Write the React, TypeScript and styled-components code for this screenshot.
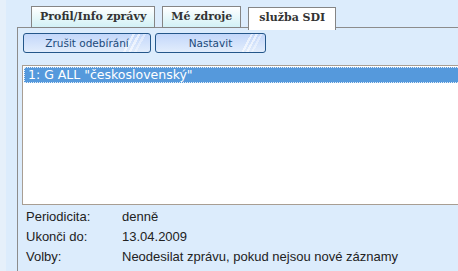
import * as React from 'react';
import styled, { createGlobalStyle } from 'styled-components';

// ========================
// Global
// ========================

const GlobalStyle = createGlobalStyle`
  html, body {
    margin: 0;
    padding: 0;
    background: #e6f0fa;
  }
`;

// ========================
// Components
// ========================

const Page = styled.div`
  height: 271px;
  padding-left: 6px;
  overflow: hidden;
`;

const Frame = styled.div`
  height: 100%;
  box-sizing: border-box;
  padding: 6px 0 0 11px;
  background: #dcecfc;
`;

const TabBar = styled.div`
  display: flex;
  align-items: flex-start;
  gap: 7px;
  padding-left: 14px;
  height: 21px;
  position: relative;
  z-index: 1;
`;

const Tab = styled.div<{ active?: boolean }>`
  box-sizing: border-box;
  height: ${(p) => (p.active ? '23px' : '22px')};
  margin-top: ${(p) => (p.active ? '1px' : '0')};
  padding: ${(p) => (p.active ? '0 10px' : '0 8px')};
  border: 1px solid #858585;
  border-bottom: ${(p) => (p.active ? 'none' : '1px solid #858585')};
  background: ${(p) => (p.active ? '#ffffff' : 'linear-gradient(#ffffff, #d2f1f6)')};
  font-family: 'DejaVu Serif', serif;
  font-weight: bold;
  font-size: 11px;
  line-height: 20px;
  color: #333;
  white-space: nowrap;
`;

const Panel = styled.div`
  height: 100%;
  border-left: 1px solid #8c8c8c;
  border-top: 1px solid #8c8c8c;
  padding: 5px 0 0 5px;
`;

const ButtonRow = styled.div`
  display: flex;
  gap: 4px;
`;

const Button = styled.button<{ w: number }>`
  box-sizing: border-box;
  width: ${(p) => p.w}px;
  height: 20px;
  padding: 0;
  border: 1px solid #24578a;
  border-radius: 3px;
  background:
    linear-gradient(
      118deg,
      transparent 80%,
      rgba(255, 255, 255, 0.6) 80%,
      rgba(255, 255, 255, 0.6) 82%,
      transparent 82%,
      transparent 84%,
      rgba(255, 255, 255, 0.6) 84%,
      rgba(255, 255, 255, 0.6) 86%,
      transparent 86%,
      transparent 88%,
      rgba(255, 255, 255, 0.4) 88%,
      rgba(255, 255, 255, 0.4) 90%,
      transparent 90%
    ),
    linear-gradient(#c3d7fa, #e2edfc);
  font-family: 'DejaVu Sans', sans-serif;
  font-size: 10.5px;
  line-height: 18px;
  color: #1b4a7a;
  text-align: center;
  cursor: pointer;
`;

const ListBox = styled.div`
  box-sizing: border-box;
  width: 460px;
  height: 140px;
  margin: 12px 0 0 -1px;
  padding: 1px;
  border: 1px solid #a89e93;
  background: #ffffff;
`;

const Option = styled.div<{ selected?: boolean }>`
  box-sizing: border-box;
  height: 16px;
  padding-left: 3px;
  border: 1px dotted ${(p) => (p.selected ? '#e4eef8' : 'transparent')};
  background: ${(p) => (p.selected ? '#5599dc' : 'transparent')};
  color: ${(p) => (p.selected ? '#ffffff' : '#222')};
  font-family: 'DejaVu Sans', sans-serif;
  font-size: 12.5px;
  line-height: 14px;
  white-space: nowrap;
`;

const InfoTable = styled.div`
  display: grid;
  grid-template-columns: 96px auto;
  grid-auto-rows: 20px;
  margin-top: 2px;
  padding-left: 3px;
  font-family: 'Liberation Sans', Arial, sans-serif;
  font-size: 13px;
  line-height: 20px;
  color: #222;
`;

const InfoCell = styled.div`
  white-space: nowrap;
`;

// ========================
// Data
// ========================

const tabs = [
  { label: 'Profil/Info zprávy' },
  { label: 'Mé zdroje' },
  { label: 'služba SDI', active: true },
];

const info = [
  ['Periodicita:', 'denně'],
  ['Ukonči do:', '13.04.2009'],
  ['Volby:', 'Neodesilat zprávu, pokud nejsou nové záznamy'],
];

export default function App() {
  return (
    <Page>
      <GlobalStyle />
      <Frame>
        <TabBar>
          {tabs.map((tab) => (
            <Tab key={tab.label} active={tab.active}>
              {tab.label}
            </Tab>
          ))}
        </TabBar>
        <Panel>
          <ButtonRow>
            <Button w={128}>Zrušit odebírání</Button>
            <Button w={111}>Nastavit</Button>
          </ButtonRow>
          <ListBox>
            <Option selected>1: G ALL "československý"</Option>
          </ListBox>
          <InfoTable>
            {info.map(([label, value]) => (
              <React.Fragment key={label}>
                <InfoCell>{label}</InfoCell>
                <InfoCell>{value}</InfoCell>
              </React.Fragment>
            ))}
          </InfoTable>
        </Panel>
      </Frame>
    </Page>
  );
}
